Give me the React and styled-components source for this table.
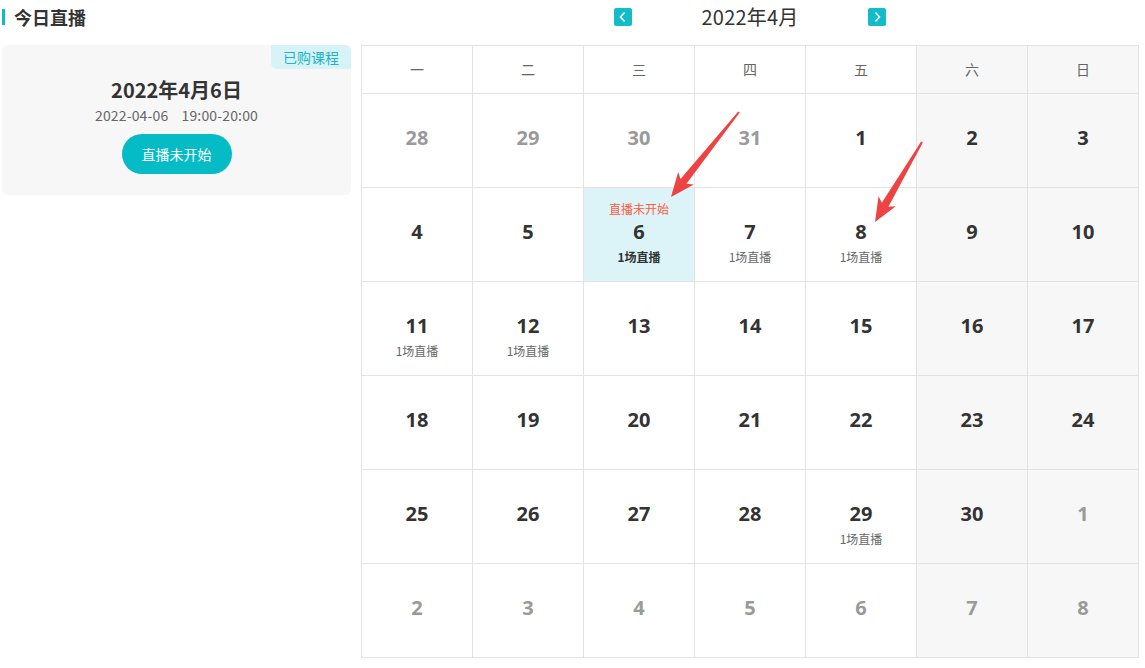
import React from "react";
import styled, { createGlobalStyle } from "styled-components";

const GlobalStyle = createGlobalStyle`
  html, body {
    margin: 0;
    padding: 0;
    background: #fff;
    font-family: "Noto Sans CJK SC", "Open Sans", sans-serif;
    color: #333;
  }
`;

const Page = styled.div`
  position: relative;
  display: flex;
  gap: 10px;
  padding: 0 2px;
  width: 1145px;
  height: 668px;
  box-sizing: border-box;
`;

const Side = styled.div`
  width: 349px;
  display: flex;
  flex-direction: column;
`;

const SideTitle = styled.div`
  height: 45px;
  display: flex;
  align-items: flex-start;
  padding-top: 6px;
  box-sizing: border-box;
  font-size: 18px;
  font-weight: 700;
  line-height: 22px;
  color: #333;
  &::before {
    content: "";
    width: 3px;
    height: 16px;
    margin-top: 3px;
    margin-right: 9px;
    background: #0bbcc6;
  }
`;

const Card = styled.div`
  position: relative;
  height: 150px;
  background: #f7f7f7;
  border-radius: 6px;
  display: flex;
  flex-direction: column;
  align-items: center;
  padding-top: 31px;
  box-sizing: border-box;
`;

const Badge = styled.span`
  position: absolute;
  top: 0;
  right: 0;
  width: 80px;
  height: 24px;
  line-height: 24px;
  text-align: center;
  font-size: 14px;
  color: #1ab6c4;
  background: #d8f3f7;
  border-radius: 0 6px 0 6px;
`;

const CardDate = styled.div`
  font-size: 20px;
  font-weight: 700;
  line-height: 28px;
  color: #333;
`;

const CardTime = styled.div`
  font-size: 14px;
  line-height: 20px;
  margin-top: 1px;
  color: #666;
  letter-spacing: 0.15px;
  white-space: pre;
`;

const LiveButton = styled.button`
  margin-top: 9px;
  width: 110px;
  height: 40px;
  border: none;
  border-radius: 20px;
  background: #05bcc6;
  color: #fff;
  font-family: inherit;
  font-size: 14px;
  cursor: pointer;
`;

const Main = styled.div`
  width: 778px;
  display: flex;
  flex-direction: column;
`;

const MonthNav = styled.div`
  height: 45px;
  display: flex;
  align-items: flex-start;
  justify-content: center;
  gap: 70px;
  padding-top: 4px;
  box-sizing: border-box;
`;

const NavButton = styled.button`
  width: 18px;
  height: 18px;
  margin-top: 4px;
  padding: 0;
  border: none;
  border-radius: 2px;
  background: #12bcc9;
  display: flex;
  align-items: center;
  justify-content: center;
  cursor: pointer;
`;

const MonthLabel = styled.div`
  font-size: 20px;
  line-height: 26px;
  color: #333;
  letter-spacing: 0.2px;
`;

const Grid = styled.div`
  display: grid;
  grid-template-columns: repeat(7, 111px);
  grid-template-rows: 48px repeat(6, 94px);
  border-left: 1px solid #e3e3e3;
  border-top: 1px solid #e3e3e3;
  width: 778px;
  box-sizing: border-box;
`;

const HeadCell = styled.div`
  border-right: 1px solid #e3e3e3;
  border-bottom: 1px solid #e3e3e3;
  background: ${(p) => (p.$weekend ? "#f7f7f7" : "#fff")};
  display: flex;
  align-items: center;
  justify-content: center;
  padding-bottom: 2px;
  font-size: 14px;
  color: #666;
`;

const DayCell = styled.div`
  border-right: 1px solid #e3e3e3;
  border-bottom: 1px solid #e3e3e3;
  background: ${(p) => (p.$active ? "#dcf3f8" : p.$weekend ? "#f7f7f7" : "#fff")};
  display: grid;
  grid-template-rows: 1fr auto 1fr;
  justify-items: center;
  padding-bottom: 5px;
`;

const Status = styled.div`
  align-self: end;
  font-size: 12px;
  line-height: 16px;
  margin-bottom: 2px;
  color: #ff5b3d;
`;

const DayNum = styled.div`
  font-family: "Open Sans", "Noto Sans CJK SC", sans-serif;
  font-size: 20px;
  font-weight: 700;
  line-height: 26px;
  color: ${(p) => (p.$other ? "#9a9a9a" : "#333")};
`;

const LiveCount = styled.div`
  align-self: start;
  font-size: 12px;
  line-height: 16px;
  margin-top: 4px;
  color: ${(p) => (p.$strong ? "#333" : "#666")};
  font-weight: ${(p) => (p.$strong ? 700 : 400)};
`;

const Overlay = styled.svg`
  position: absolute;
  top: 0;
  left: 0;
  width: 1145px;
  height: 668px;
  pointer-events: none;
`;

const weekdays = ["一", "二", "三", "四", "五", "六", "日"];

const days = [
  [28, 1], [29, 1], [30, 1], [31, 1], [1], [2], [3],
  [4], [5], [6, 0, 1, "直播未开始"], [7, 0, 1], [8, 0, 1], [9], [10],
  [11, 0, 1], [12, 0, 1], [13], [14], [15], [16], [17],
  [18], [19], [20], [21], [22], [23], [24],
  [25], [26], [27], [28], [29, 0, 1], [30], [1, 1],
  [2, 1], [3, 1], [4, 1], [5, 1], [6, 1], [7, 1], [8, 1],
];

const Chevron = ({ dir }) => (
  <svg width="10" height="12" viewBox="0 0 10 12">
    <path
      d={dir === "left" ? "M6.5 1.5 L2.5 6 L6.5 10.5" : "M3.5 1.5 L7.5 6 L3.5 10.5"}
      fill="none"
      stroke="#fff"
      strokeWidth="1.6"
    />
  </svg>
);

const Arrow = ({ x1, y1, x2, y2 }) => {
  const dx = x2 - x1;
  const dy = y2 - y1;
  const len = Math.sqrt(dx * dx + dy * dy);
  const angle = (Math.atan2(dy, dx) * 180) / Math.PI;
  const pts = [
    [0, -1],
    [len - 20, -3.8],
    [len - 24, -10],
    [len, 0],
    [len - 24, 10],
    [len - 20, 3.8],
    [0, 1],
  ]
    .map((p) => p.join(","))
    .join(" ");
  return (
    <polygon
      points={pts}
      fill="#ee4343"
      transform={`translate(${x1} ${y1}) rotate(${angle})`}
    />
  );
};

export default function App() {
  return (
    <>
      <GlobalStyle />
      <Page>
        <Side>
          <SideTitle>今日直播</SideTitle>
          <Card>
            <Badge>已购课程</Badge>
            <CardDate>2022年4月6日</CardDate>
            <CardTime>{"2022-04-06    19:00-20:00"}</CardTime>
            <LiveButton>直播未开始</LiveButton>
          </Card>
        </Side>
        <Main>
          <MonthNav>
            <NavButton aria-label="上个月">
              <Chevron dir="left" />
            </NavButton>
            <MonthLabel>2022年4月</MonthLabel>
            <NavButton aria-label="下个月">
              <Chevron dir="right" />
            </NavButton>
          </MonthNav>
          <Grid>
            {weekdays.map((w, i) => (
              <HeadCell key={w} $weekend={i >= 5}>
                {w}
              </HeadCell>
            ))}
            {days.map(([n, other, live, status], i) => (
              <DayCell key={i} $weekend={i % 7 >= 5} $active={!!status}>
                <Status>{status || ""}</Status>
                <DayNum $other={!!other}>{n}</DayNum>
                <LiveCount $strong={!!status}>{live ? "1场直播" : ""}</LiveCount>
              </DayCell>
            ))}
          </Grid>
        </Main>
        <Overlay viewBox="0 0 1145 668">
          <Arrow x1={739} y1={112} x2={671} y2={197} />
          <Arrow x1={922} y1={142} x2={875} y2={222} />
        </Overlay>
      </Page>
    </>
  );
}
